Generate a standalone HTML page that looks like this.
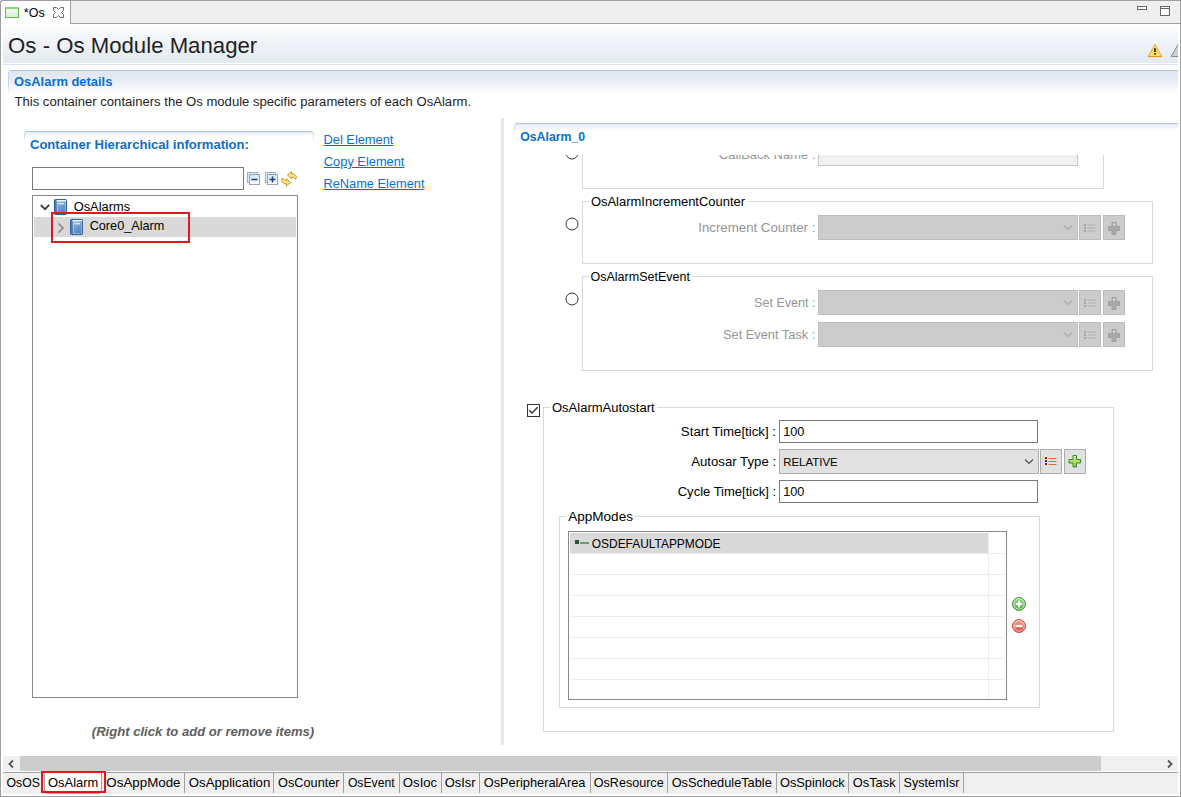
<!DOCTYPE html><html><head><meta charset="utf-8"><style>html,body{margin:0;padding:0;width:1181px;height:797px;overflow:hidden;background:#fff}body{position:relative;font-family:"Liberation Sans",sans-serif}div,svg{position:absolute}.t{line-height:1;white-space:pre}</style></head><body>
<div style="left:0px;top:0px;width:1181px;height:797px;background:#fff"></div>
<div style="left:70px;top:0px;width:1111px;height:24px;background:#efefef"></div>
<div style="left:0px;top:0px;width:1181px;height:1px;background:#a0a0a0"></div>
<div style="left:70px;top:0px;width:1px;height:24px;background:#a0a0a0"></div>
<div style="left:70px;top:23px;width:1111px;height:1px;background:#a0a0a0"></div>
<div style="left:0px;top:0px;width:1px;height:797px;background:#a0a0a0"></div>
<div style="left:1180px;top:0px;width:1px;height:797px;background:#a0a0a0"></div>
<div style="left:0px;top:796px;width:1181px;height:1px;background:#a0a0a0"></div>
<div style="left:5px;top:7px;width:14px;height:11px;box-sizing:border-box;border:1px solid #62b955;border-top:2px solid #8ed47f;background:linear-gradient(#f4fbf2,#d9efd2)"></div>
<div style="left:0px;top:0px;width:1px;height:1px;background:#fff"></div>
<div style="left:1px;top:1px;width:1px;height:1px;background:#999"></div>
<svg style="left:53px;top:7px" width="11" height="11" viewBox="0 0 11 11"><path d="M0.5 0.5h3l2 2 2-2h3v3l-2 2 2 2v3h-3l-2-2-2 2h-3v-3l2-2-2-2z" fill="none" stroke="#6a6a6a" stroke-width="1" stroke-linejoin="round"/></svg>
<div style="left:1137px;top:6px;width:10px;height:4px;box-sizing:border-box;border:1px solid #666;background:#fff"></div>
<div style="left:1160px;top:6px;width:10px;height:10px;box-sizing:border-box;border:1px solid #666;background:#fff"></div>
<div style="left:1161px;top:8px;width:8px;height:1px;background:#666"></div>
<div style="left:3px;top:24px;width:1175px;height:39px;background:linear-gradient(#ffffff 0%,#f4f7fb 30%,#e3e9f2 100%)"></div>
<div style="left:3px;top:64px;width:1175px;height:1px;background:#d9e2ed"></div>
<svg style="left:1147px;top:43px" width="16" height="15" viewBox="0 0 16 15"><defs><linearGradient id="wg" x1="0" y1="0" x2="0" y2="1"><stop offset="0" stop-color="#fff6c0"/><stop offset="0.5" stop-color="#f9dc55"/><stop offset="1" stop-color="#f7e27a"/></linearGradient></defs><path d="M8 1.5L14.8 13.5H1.2z" fill="url(#wg)" stroke="#e8a428" stroke-width="1" stroke-linejoin="round"/><path d="M1.5 13.5H14.5" stroke="#e39a1a" stroke-width="1.2"/><rect x="7.2" y="5.2" width="1.6" height="3.8" fill="#111"/><rect x="7.2" y="10" width="1.6" height="1.6" fill="#111"/></svg>
<svg style="left:1170px;top:43px" width="8" height="15" viewBox="0 0 8 15"><path d="M8 1.5L14.8 13.5H1.2z" fill="#d0d0d0" stroke="#8c8c8c" stroke-width="1" stroke-linejoin="round"/></svg>
<div style="left:8px;top:70px;width:1170px;height:26px;box-sizing:border-box;border-top:1px solid #b3c4d9;border-left:1px solid #c9d6e5;border-top-left-radius:3px;-webkit-mask-image:linear-gradient(#000 50%,transparent)"></div>
<div style="left:9px;top:71px;width:1169px;height:23px;background:linear-gradient(#dfe6ef,#e8edf4 40%,#ffffff)"></div>
<div style="left:24px;top:131px;width:290px;height:11px;box-sizing:border-box;border-top:1px solid #b3c4d9;border-left:1px solid #c9d6e5;border-right:1px solid #c9d6e5;border-top-left-radius:3px;border-top-right-radius:3px;background:linear-gradient(#e6ecf4,#ffffff 50%);-webkit-mask-image:linear-gradient(#000 30%,transparent)"></div>
<div style="left:32px;top:167px;width:212px;height:23px;box-sizing:border-box;border:1px solid #7a7a7a;background:#fff"></div>
<svg style="left:247px;top:171px" width="14" height="15" viewBox="0 0 14 15"><defs><linearGradient id="cg" x1="0" y1="0" x2="0" y2="1"><stop offset="0" stop-color="#cfe6fa"/><stop offset="1" stop-color="#f5fbff"/></linearGradient></defs><rect x="0.5" y="1.5" width="10" height="10" fill="#dcebf8" stroke="#a3aec0"/><rect x="2.5" y="3.5" width="10" height="10" fill="url(#cg)" stroke="#9aa4b6"/><path d="M4.5 8.5h6" stroke="#123f75" stroke-width="1.5"/></svg>
<svg style="left:265px;top:171px" width="14" height="15" viewBox="0 0 14 15"><rect x="0.5" y="1.5" width="10" height="10" fill="#dcebf8" stroke="#a3aec0"/><rect x="2.5" y="3.5" width="10" height="10" fill="url(#cg)" stroke="#9aa4b6"/><path d="M4.5 8.5h6M7.5 5.5v6" stroke="#123f75" stroke-width="1.5"/></svg>
<svg style="left:278px;top:166px" width="22" height="24" viewBox="0 0 22 24"><path d="M9.5 9L13.5 5.5V7.8H15.8L18.2 10.2V12.8L16.5 13L15 11.2H13.5V12.8z" fill="#f8e48a" stroke="#d19a14" stroke-width="1" stroke-linejoin="round"/><path d="M12.5 16.5L8.5 20V17.7H6.2L3.8 15.3V12.7L5.5 12.5L7 14.3H8.5V12.7z" fill="#f8e48a" stroke="#d19a14" stroke-width="1" stroke-linejoin="round"/></svg>
<div style="left:32px;top:195px;width:266px;height:503px;box-sizing:border-box;border:1px solid #828790;background:#fff"></div>
<div style="left:34px;top:217px;width:262px;height:20px;background:#d9d9d9"></div>
<svg style="left:39px;top:202px" width="12" height="9" viewBox="0 0 12 9"><path d="M1.8 3l4.2 4.2 4.2-4.2" fill="none" stroke="#404040" stroke-width="1.8"/></svg>
<svg style="left:56px;top:222px" width="9" height="12" viewBox="0 0 9 12"><path d="M2.5 1.5l4.5 4.5-4.5 4.5" fill="none" stroke="#8a8a8a" stroke-width="1.6"/></svg>
<svg style="left:54px;top:199px" width="14" height="17" viewBox="0 0 14 17"><defs><linearGradient id="bg1" x1="0" y1="0" x2="0.6" y2="1"><stop offset="0" stop-color="#a6c6e8"/><stop offset="1" stop-color="#4f82bd"/></linearGradient></defs><rect x="0.5" y="0.5" width="12" height="15" rx="0.8" fill="url(#bg1)" stroke="#35619a"/><rect x="1" y="1" width="1.6" height="14" fill="#4a78b0"/><rect x="2.6" y="1" width="9.4" height="1.3" fill="#f4f8fc"/><rect x="3.5" y="2.8" width="8" height="11.7" fill="none" stroke="#c9dcf0" stroke-width="0.7" opacity="0.7"/><rect x="4.5" y="4.2" width="5.5" height="1.1" fill="#eef4fa"/></svg>
<svg style="left:70px;top:219px" width="14" height="17" viewBox="0 0 14 17"><defs><linearGradient id="bg2" x1="0" y1="0" x2="0.6" y2="1"><stop offset="0" stop-color="#a6c6e8"/><stop offset="1" stop-color="#4f82bd"/></linearGradient></defs><rect x="0.5" y="0.5" width="12" height="15" rx="0.8" fill="url(#bg2)" stroke="#35619a"/><rect x="1" y="1" width="1.6" height="14" fill="#4a78b0"/><rect x="2.6" y="1" width="9.4" height="1.3" fill="#f4f8fc"/><rect x="3.5" y="2.8" width="8" height="11.7" fill="none" stroke="#c9dcf0" stroke-width="0.7" opacity="0.7"/><rect x="4.5" y="4.2" width="5.5" height="1.1" fill="#eef4fa"/></svg>
<div style="left:51px;top:212px;width:139px;height:31px;box-sizing:border-box;border:2px solid #e8141c"></div>
<div style="left:501px;top:118px;width:3px;height:627px;background:#e3e8ef"></div>
<div style="left:514px;top:123px;width:664px;height:11px;box-sizing:border-box;border-top:1px solid #b3c4d9;border-left:1px solid #c9d6e5;border-top-left-radius:3px;background:linear-gradient(#e6ecf4,#ffffff 80%);-webkit-mask-image:linear-gradient(#000 40%,transparent)"></div>
<div class="t" style="font-size:12.54px;font-weight:normal;font-style:normal;color:#000;top:7px;left:23.87px;">*Os</div>
<div class="t" style="font-size:22.20px;font-weight:normal;font-style:normal;color:#1e1e1e;top:35px;left:8.11px;">Os - Os Module Manager</div>
<div class="t" style="font-size:12.92px;font-weight:bold;font-style:normal;color:#0a6fd0;top:76px;left:14.08px;">OsAlarm details</div>
<div class="t" style="font-size:13.09px;font-weight:normal;font-style:normal;color:#1e1e1e;top:95px;left:14.54px;">This container containers the Os module specific parameters of each OsAlarm.</div>
<div class="t" style="font-size:13.06px;font-weight:bold;font-style:normal;color:#0a6fd0;top:138px;left:29.98px;">Container Hierarchical information:</div>
<div class="t" style="font-size:12.85px;font-weight:normal;font-style:normal;color:#000;top:201px;left:73.69px;">OsAlarms</div>
<div class="t" style="font-size:12.69px;font-weight:normal;font-style:normal;color:#000;top:220px;left:89.67px;">Core0_Alarm</div>
<div class="t" style="font-size:13.09px;font-weight:bold;font-style:italic;color:#5f5f5f;top:725px;left:91.81px;">(Right click to add or remove items)</div>
<div class="t" style="font-size:12.85px;font-weight:normal;font-style:normal;color:#0a6fd0;top:134px;text-decoration:underline;left:323.47px;">Del Element</div>
<div class="t" style="font-size:12.84px;font-weight:normal;font-style:normal;color:#0a6fd0;top:156px;text-decoration:underline;left:323.86px;">Copy Element</div>
<div class="t" style="font-size:12.80px;font-weight:normal;font-style:normal;color:#0a6fd0;top:178px;text-decoration:underline;left:323.48px;">ReName Element</div>
<div class="t" style="font-size:12.30px;font-weight:bold;font-style:normal;color:#0a6fd0;top:131px;left:520.21px;">OsAlarm_0</div>
<div style="left:514px;top:155px;width:667px;height:590px;overflow:hidden">
<div style="left:68px;top:-35px;width:522px;height:69px;box-sizing:border-box;border:1px solid #dadada"></div>
<svg style="left:51px;top:-9px" width="14" height="14" viewBox="0 0 14 14"><circle cx="7" cy="7" r="6" fill="#fff" stroke="#333" stroke-width="1"/></svg>
<div style="left:304px;top:-14px;width:260px;height:25px;box-sizing:border-box;border:1px solid #c6c6c6;background:#f0f0f0"></div>
<div style="left:68px;top:46px;width:571px;height:63px;box-sizing:border-box;border:1px solid #dadada"></div>
<div style="left:75px;top:44px;width:158px;height:5px;background:#fff"></div>
<svg style="left:51px;top:62.400000000000006px" width="14" height="14" viewBox="0 0 14 14"><circle cx="7" cy="7" r="6" fill="#fff" stroke="#333" stroke-width="1"/></svg>
<div style="left:304px;top:60px;width:260px;height:25px;box-sizing:border-box;border:1px solid #bdbdbd;background:#cccccc"></div>
<svg style="left:549px;top:69px" width="10" height="7" viewBox="0 0 10 7"><path d="M1 1.5l4 4 4-4" fill="none" stroke="#a8a8a8" stroke-width="1.1"/></svg>
<div style="left:565px;top:60px;width:22px;height:25px;box-sizing:border-box;border:1px solid #bdbdbd;background:#cccccc"></div>
<div style="left:589px;top:60px;width:22px;height:25px;box-sizing:border-box;border:1px solid #bdbdbd;background:#cccccc"></div>
<svg style="left:569px;top:66.5px" width="14" height="12" viewBox="0 0 14 12"><rect x="1" y="2" width="2" height="2" fill="#a5a5a5"/><rect x="1" y="5" width="2" height="2" fill="#a5a5a5"/><rect x="1" y="8" width="2" height="2" fill="#a5a5a5"/><path d="M4.5 3h8M4.5 6h8M4.5 9h8" stroke="#b0b0b0" stroke-width="1.1"/></svg>
<svg style="left:593px;top:65.5px" width="14" height="14" viewBox="0 0 14 14"><path d="M5 1.5h4v4h3.5v4H9v4H5v-4H1.5v-4H5z" fill="#a8a8a8" stroke="#a0a0a0" stroke-width="1"/><rect x="6" y="2.5" width="2" height="2" fill="#e0e0e0"/></svg>
<div style="left:68px;top:121px;width:571px;height:95px;box-sizing:border-box;border:1px solid #dadada"></div>
<div style="left:75px;top:119px;width:103px;height:5px;background:#fff"></div>
<svg style="left:51px;top:137px" width="14" height="14" viewBox="0 0 14 14"><circle cx="7" cy="7" r="6" fill="#fff" stroke="#333" stroke-width="1"/></svg>
<div style="left:304px;top:135px;width:260px;height:25px;box-sizing:border-box;border:1px solid #bdbdbd;background:#cccccc"></div>
<svg style="left:549px;top:144px" width="10" height="7" viewBox="0 0 10 7"><path d="M1 1.5l4 4 4-4" fill="none" stroke="#a8a8a8" stroke-width="1.1"/></svg>
<div style="left:565px;top:135px;width:22px;height:25px;box-sizing:border-box;border:1px solid #bdbdbd;background:#cccccc"></div>
<div style="left:589px;top:135px;width:22px;height:25px;box-sizing:border-box;border:1px solid #bdbdbd;background:#cccccc"></div>
<svg style="left:569px;top:141.5px" width="14" height="12" viewBox="0 0 14 12"><rect x="1" y="2" width="2" height="2" fill="#a5a5a5"/><rect x="1" y="5" width="2" height="2" fill="#a5a5a5"/><rect x="1" y="8" width="2" height="2" fill="#a5a5a5"/><path d="M4.5 3h8M4.5 6h8M4.5 9h8" stroke="#b0b0b0" stroke-width="1.1"/></svg>
<svg style="left:593px;top:140.5px" width="14" height="14" viewBox="0 0 14 14"><path d="M5 1.5h4v4h3.5v4H9v4H5v-4H1.5v-4H5z" fill="#a8a8a8" stroke="#a0a0a0" stroke-width="1"/><rect x="6" y="2.5" width="2" height="2" fill="#e0e0e0"/></svg>
<div style="left:304px;top:167px;width:260px;height:25px;box-sizing:border-box;border:1px solid #bdbdbd;background:#cccccc"></div>
<svg style="left:549px;top:176px" width="10" height="7" viewBox="0 0 10 7"><path d="M1 1.5l4 4 4-4" fill="none" stroke="#a8a8a8" stroke-width="1.1"/></svg>
<div style="left:565px;top:167px;width:22px;height:25px;box-sizing:border-box;border:1px solid #bdbdbd;background:#cccccc"></div>
<div style="left:589px;top:167px;width:22px;height:25px;box-sizing:border-box;border:1px solid #bdbdbd;background:#cccccc"></div>
<svg style="left:569px;top:173.5px" width="14" height="12" viewBox="0 0 14 12"><rect x="1" y="2" width="2" height="2" fill="#a5a5a5"/><rect x="1" y="5" width="2" height="2" fill="#a5a5a5"/><rect x="1" y="8" width="2" height="2" fill="#a5a5a5"/><path d="M4.5 3h8M4.5 6h8M4.5 9h8" stroke="#b0b0b0" stroke-width="1.1"/></svg>
<svg style="left:593px;top:172.5px" width="14" height="14" viewBox="0 0 14 14"><path d="M5 1.5h4v4h3.5v4H9v4H5v-4H1.5v-4H5z" fill="#a8a8a8" stroke="#a0a0a0" stroke-width="1"/><rect x="6" y="2.5" width="2" height="2" fill="#e0e0e0"/></svg>
<div style="left:13px;top:249px;width:13px;height:13px;box-sizing:border-box;border:1px solid #333;background:#fff"></div>
<svg style="left:13px;top:249px" width="13" height="13" viewBox="0 0 13 13"><path d="M2.3 6.2L5 9L10.7 3.2" fill="none" stroke="#333" stroke-width="1.4"/></svg>
<div style="left:29px;top:252px;width:571px;height:325px;box-sizing:border-box;border:1px solid #dadada"></div>
<div style="left:36px;top:250px;width:107px;height:5px;background:#fff"></div>
<div style="left:265px;top:265px;width:259px;height:23px;box-sizing:border-box;border:1px solid #7a7a7a;background:#fff"></div>
<div style="left:265px;top:294px;width:260px;height:25px;box-sizing:border-box;border:1px solid #adadad;background:#e1e1e1"></div>
<svg style="left:510px;top:303px" width="10" height="7" viewBox="0 0 10 7"><path d="M1 1.5l4 4 4-4" fill="none" stroke="#4a4a4a" stroke-width="1.1"/></svg>
<div style="left:526px;top:294px;width:22px;height:25px;box-sizing:border-box;border:1px solid #adadad;background:#e1e1e1"></div>
<div style="left:550px;top:294px;width:22px;height:25px;box-sizing:border-box;border:1px solid #adadad;background:#e1e1e1"></div>
<svg style="left:530px;top:300.0px" width="14" height="12" viewBox="0 0 14 12"><rect x="1" y="2" width="2" height="2" fill="#6e2410"/><rect x="1" y="5" width="2" height="2" fill="#6e2410"/><rect x="1" y="8" width="2" height="2" fill="#6e2410"/><path d="M4.5 3.5h8M4.5 6.5h8M4.5 9.5h8" stroke="#dd6a40" stroke-width="1"/></svg>
<svg style="left:554px;top:299.0px" width="14" height="14" viewBox="0 0 14 14"><defs><linearGradient id="pg" x1="0" y1="0" x2="0" y2="1"><stop offset="0" stop-color="#e9f07a"/><stop offset="1" stop-color="#8fc63c"/></linearGradient></defs><path d="M5 1.5h3.5v4h4v3.5h-4v4H5v-4H1v-3.5h4z" fill="url(#pg)" stroke="#2f8a3c" stroke-width="1"/></svg>
<div style="left:265px;top:325px;width:259px;height:23px;box-sizing:border-box;border:1px solid #7a7a7a;background:#fff"></div>
<div style="left:45px;top:361px;width:481px;height:192px;box-sizing:border-box;border:1px solid #dadada"></div>
<div style="left:52px;top:359px;width:69px;height:5px;background:#fff"></div>
<div style="left:54px;top:376px;width:439px;height:169px;box-sizing:border-box;border:1px solid #828790;background:#fff"></div>
<div style="left:56px;top:378px;width:418px;height:20px;background:#d9d9d9"></div>
<div style="left:56px;top:398px;width:435px;height:1px;background:#ececec"></div>
<div style="left:56px;top:419px;width:435px;height:1px;background:#ececec"></div>
<div style="left:56px;top:440px;width:435px;height:1px;background:#ececec"></div>
<div style="left:56px;top:461px;width:435px;height:1px;background:#ececec"></div>
<div style="left:56px;top:482px;width:435px;height:1px;background:#ececec"></div>
<div style="left:56px;top:503px;width:435px;height:1px;background:#ececec"></div>
<div style="left:56px;top:524px;width:435px;height:1px;background:#ececec"></div>
<div style="left:474px;top:378px;width:1px;height:165px;background:#e8eef7"></div>
<svg style="left:61px;top:384px" width="15" height="7" viewBox="0 0 15 7"><rect x="0" y="1" width="4" height="4" fill="#2d5234"/><path d="M5 4h9" stroke="#4f8a5a" stroke-width="1.6"/></svg>
<svg style="left:498px;top:442px" width="15" height="15" viewBox="0 0 15 15"><defs><linearGradient id="ga" x1="0" y1="0" x2="0" y2="1"><stop offset="0" stop-color="#9fdc8a"/><stop offset="1" stop-color="#4fa84a"/></linearGradient></defs><circle cx="7" cy="7" r="6.5" fill="url(#ga)" stroke="#4a9a45" stroke-width="1"/><circle cx="7" cy="7" r="5.2" fill="none" stroke="#d8f2cf" stroke-width="0.8"/><path d="M3.8 7h6.4M7 3.8v6.4" stroke="#fff" stroke-width="2"/></svg>
<svg style="left:498px;top:464px" width="15" height="15" viewBox="0 0 15 15"><defs><linearGradient id="gr" x1="0" y1="0" x2="0" y2="1"><stop offset="0" stop-color="#f6a595"/><stop offset="1" stop-color="#dc4b3e"/></linearGradient></defs><circle cx="7" cy="7" r="6.5" fill="url(#gr)" stroke="#cf5045" stroke-width="1"/><circle cx="7" cy="7" r="5.2" fill="none" stroke="#fbd5cc" stroke-width="0.8"/><path d="M3.5 7h7" stroke="#fff" stroke-width="2.2"/></svg>
</div>
<div style="left:514px;top:155px;width:667px;height:590px;overflow:hidden">
<div class="t" style="font-size:12.97px;font-weight:normal;font-style:normal;color:#959595;top:-6px;left:204.85px;">CallBack Name :</div>
<div class="t" style="font-size:12.97px;font-weight:normal;font-style:normal;color:#000;top:41px;left:76.88px;">OsAlarmIncrementCounter</div>
<div class="t" style="font-size:13.25px;font-weight:normal;font-style:normal;color:#959595;top:66px;left:184.27px;">Increment Counter :</div>
<div class="t" style="font-size:12.52px;font-weight:normal;font-style:normal;color:#000;top:116px;left:76.50px;">OsAlarmSetEvent</div>
<div class="t" style="font-size:12.57px;font-weight:normal;font-style:normal;color:#959595;top:142px;left:240.12px;">Set Event :</div>
<div class="t" style="font-size:12.82px;font-weight:normal;font-style:normal;color:#959595;top:174px;left:208.99px;">Set Event Task :</div>
<div class="t" style="font-size:13.03px;font-weight:normal;font-style:normal;color:#000;top:246px;left:37.98px;">OsAlarmAutostart</div>
<div class="t" style="font-size:13.29px;font-weight:normal;font-style:normal;color:#000;top:270px;left:166.86px;">Start Time[tick] :</div>
<div class="t" style="font-size:13.21px;font-weight:normal;font-style:normal;color:#000;top:300px;left:177.19px;">Autosar Type :</div>
<div class="t" style="font-size:13.02px;font-weight:normal;font-style:normal;color:#000;top:330px;left:163.72px;">Cycle Time[tick] :</div>
<div class="t" style="font-size:12.74px;font-weight:normal;font-style:normal;color:#000;top:271px;left:269.21px;">100</div>
<div class="t" style="font-size:11.46px;font-weight:normal;font-style:normal;color:#000;top:302px;left:269.18px;">RELATIVE</div>
<div class="t" style="font-size:12.74px;font-weight:normal;font-style:normal;color:#000;top:331px;left:269.21px;">100</div>
<div class="t" style="font-size:13.53px;font-weight:normal;font-style:normal;color:#000;top:355px;left:54.30px;">AppModes</div>
<div class="t" style="font-size:11.93px;font-weight:normal;font-style:normal;color:#000;top:384px;left:77.82px;">OSDEFAULTAPPMODE</div>
</div>
<div style="left:3px;top:756px;width:1175px;height:15px;background:#f0f0f0"></div>
<div style="left:20px;top:756px;width:1081px;height:15px;background:#cdcdcd"></div>
<svg style="left:7px;top:759px" width="8" height="10" viewBox="0 0 8 10"><path d="M6 1.5L2.5 5 6 8.5" fill="none" stroke="#555" stroke-width="1.8"/></svg>
<svg style="left:1166px;top:759px" width="8" height="10" viewBox="0 0 8 10"><path d="M2 1.5L5.5 5 2 8.5" fill="none" stroke="#555" stroke-width="1.8"/></svg>
<div style="left:3px;top:772px;width:1175px;height:1px;background:#a0a0a0"></div>
<div style="left:3px;top:773px;width:1175px;height:21px;background:#f0f0f0"></div>
<div style="left:44px;top:773px;width:58px;height:19px;background:#fff;box-sizing:border-box;border-left:1px solid #a0a0a0;border-right:1px solid #a0a0a0"></div>
<div style="left:184px;top:773px;width:1px;height:20px;background:#a0a0a0"></div>
<div style="left:273px;top:773px;width:1px;height:20px;background:#a0a0a0"></div>
<div style="left:343px;top:773px;width:1px;height:20px;background:#a0a0a0"></div>
<div style="left:399px;top:773px;width:1px;height:20px;background:#a0a0a0"></div>
<div style="left:441px;top:773px;width:1px;height:20px;background:#a0a0a0"></div>
<div style="left:479px;top:773px;width:1px;height:20px;background:#a0a0a0"></div>
<div style="left:590px;top:773px;width:1px;height:20px;background:#a0a0a0"></div>
<div style="left:667px;top:773px;width:1px;height:20px;background:#a0a0a0"></div>
<div style="left:776px;top:773px;width:1px;height:20px;background:#a0a0a0"></div>
<div style="left:848px;top:773px;width:1px;height:20px;background:#a0a0a0"></div>
<div style="left:899px;top:773px;width:1px;height:20px;background:#a0a0a0"></div>
<div style="left:963px;top:773px;width:1px;height:20px;background:#a0a0a0"></div>
<div style="left:46px;top:793px;width:54px;height:1px;background:#a8a8a8"></div>
<div style="left:41px;top:771px;width:65px;height:22px;box-sizing:border-box;border:2px solid #e8141c"></div>
<div class="t" style="font-size:12.28px;font-weight:normal;font-style:normal;color:#000;top:777px;left:6.51px;">OsOS</div>
<div class="t" style="font-size:12.94px;font-weight:normal;font-style:normal;color:#000;top:777px;left:47.98px;">OsAlarm</div>
<div class="t" style="font-size:13.35px;font-weight:normal;font-style:normal;color:#000;top:776px;left:106.37px;">OsAppMode</div>
<div class="t" style="font-size:13.19px;font-weight:normal;font-style:normal;color:#000;top:776px;left:188.87px;">OsApplication</div>
<div class="t" style="font-size:12.73px;font-weight:normal;font-style:normal;color:#000;top:777px;left:278.09px;">OsCounter</div>
<div class="t" style="font-size:12.17px;font-weight:normal;font-style:normal;color:#000;top:777px;left:347.91px;">OsEvent</div>
<div class="t" style="font-size:13.13px;font-weight:normal;font-style:normal;color:#000;top:776px;left:402.87px;">OsIoc</div>
<div class="t" style="font-size:12.93px;font-weight:normal;font-style:normal;color:#000;top:777px;left:444.68px;">OsIsr</div>
<div class="t" style="font-size:12.80px;font-weight:normal;font-style:normal;color:#000;top:777px;left:483.69px;">OsPeripheralArea</div>
<div class="t" style="font-size:12.57px;font-weight:normal;font-style:normal;color:#000;top:777px;left:593.80px;">OsResource</div>
<div class="t" style="font-size:12.77px;font-weight:normal;font-style:normal;color:#000;top:777px;left:671.69px;">OsScheduleTable</div>
<div class="t" style="font-size:12.81px;font-weight:normal;font-style:normal;color:#000;top:777px;left:779.99px;">OsSpinlock</div>
<div class="t" style="font-size:12.83px;font-weight:normal;font-style:normal;color:#000;top:777px;left:852.79px;">OsTask</div>
<div class="t" style="font-size:12.57px;font-weight:normal;font-style:normal;color:#000;top:777px;left:903.60px;">SystemIsr</div>
</body></html>
